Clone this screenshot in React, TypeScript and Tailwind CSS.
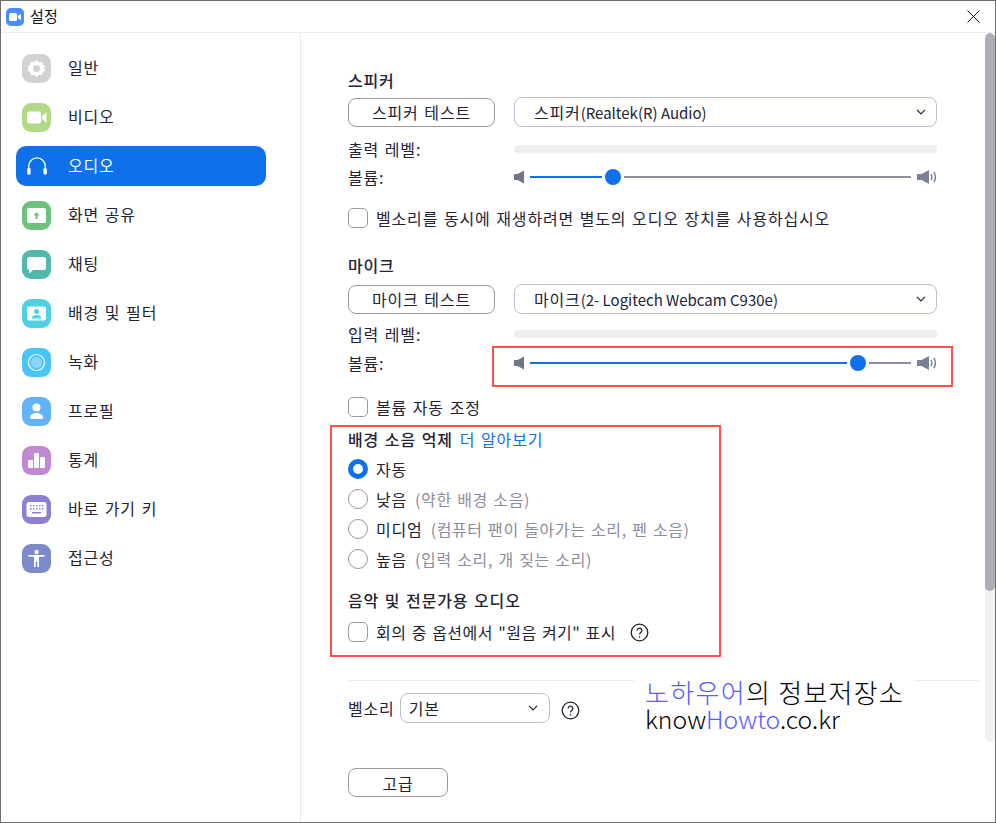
import type { ReactNode } from "react";

const FONT = "font-['Noto_Sans_CJK_KR','Liberation_Sans',sans-serif]";
// hangul in the shot runs wider than Noto, latin does not
const BODY = "text-[16px] tracking-[0.83px] [word-spacing:1.3px]";
const LATIN = "text-[15px] tracking-normal [word-spacing:0px]";

function Tile({ color, children }: { color: string; children: ReactNode }) {
  return (
    <div className={`w-[29px] h-[29px] rounded-[9px] flex items-center justify-center shrink-0 ${color}`}>
      <svg width="29" height="29" viewBox="0 0 29 29" fill="#fff">{children}</svg>
    </div>
  );
}

const nav = [
  {
    label: "일반",
    color: "bg-[#d2d2d2]",
    icon: (
      <path
        fillRule="evenodd"
        d="M14.5 6l2.2 2.3 3.2-.6 1 3.1 2.6 2-1.6 1.7 1.6 1.7-2.6 2-1 3.1-3.2-.6-2.2 2.3-2.2-2.3-3.2.6-1-3.1-2.6-2 1.6-1.7-1.6-1.7 2.6-2 1-3.1 3.2.6zM14.5 11a3.5 3.5 0 100 7 3.5 3.5 0 000-7z"
      />
    ),
  },
  {
    label: "비디오",
    color: "bg-[#b2da86]",
    icon: (
      <>
        <rect x="5" y="8.5" width="14" height="12" rx="2.5" />
        <path d="M20 13l4.5-3.5v10L20 16z" />
      </>
    ),
  },
  { label: "오디오", active: true },
  {
    label: "화면 공유",
    color: "bg-[#6dc27d]",
    icon: (
      <>
        <rect x="5" y="7" width="19" height="15" rx="2" />
        <path d="M14.5 11l3 3.4h-2v3.6h-2v-3.6h-2z" fill="#6dc27d" />
      </>
    ),
  },
  {
    label: "채팅",
    color: "bg-[#4fb9ac]",
    icon: <path d="M7.5 7h14a2.5 2.5 0 012.5 2.5v8a2.5 2.5 0 01-2.5 2.5H11l-4 3.5V20a2.5 2.5 0 01-2-2.5v-8A2.5 2.5 0 017.5 7z" />,
  },
  {
    label: "배경 및 필터",
    color: "bg-[#50d1e3]",
    icon: (
      <>
        <rect x="5" y="7.5" width="19" height="14" rx="2" />
        <circle cx="14.5" cy="12.5" r="2.5" fill="#50d1e3" />
        <path d="M9.5 19.5c0-2.5 2.2-3.5 5-3.5s5 1 5 3.5z" fill="#50d1e3" />
      </>
    ),
  },
  {
    label: "녹화",
    color: "bg-[#4ac4fa]",
    icon: (
      <>
        <circle cx="14.5" cy="14.5" r="8" fill="none" stroke="#fff" strokeWidth="1.2" />
        <circle cx="14.5" cy="14.5" r="5.5" fill="#fff" opacity="0.35" />
      </>
    ),
  },
  {
    label: "프로필",
    color: "bg-[#63b3f9]",
    icon: (
      <>
        <circle cx="14.5" cy="10.5" r="4" />
        <path d="M8 20.5c0-3 3-4.500 6.500-4.500s6.500 1.500 6.500 4.500c0 1-1 1.500-2 1.500h-9c-1 0-2-.5-2-1.500z" />
      </>
    ),
  },
  {
    label: "통계",
    color: "bg-[#c388d4]",
    icon: (
      <>
        <rect x="6" y="14" width="5" height="8" rx="1" />
        <rect x="12" y="7" width="5" height="15" rx="1" />
        <rect x="18" y="11" width="5" height="11" rx="1" />
      </>
    ),
  },
  {
    label: "바로 가기 키",
    color: "bg-[#8d7fd1]",
    icon: (
      <>
        <rect x="4.500" y="7" width="20" height="15" rx="2.500" />
        <path
          d="M8 10h1.500v1.500H8zM11 10h1.500v1.500H11zM14 10h1.500v1.500H14zM17 10h1.500v1.500H17zM20 10h1.500v1.500H20zM8 13h1.500v1.500H8zM11 13h1.500v1.500H11zM14 13h1.500v1.500H14zM17 13h1.500v1.500H17zM20 13h1.500v1.500H20zM10 17h9v1.500h-9z"
          fill="#8d7fd1"
        />
      </>
    ),
  },
  {
    label: "접근성",
    color: "bg-[#7b8acb]",
    icon: (
      <>
        <circle cx="14.5" cy="8" r="2.2" />
        <path d="M6.500 11h16v1.800h-5.500V23h-1.700v-5.500h-1.600V23H12V12.800H6.500z" />
      </>
    ),
  },
];

function Chevron() {
  return (
    <svg width="10" height="6" viewBox="0 0 10 6" fill="none" stroke="#232333" strokeWidth="1.2">
      <path d="M1 .8l4 4 4-4" />
    </svg>
  );
}

function Button({ width, children }: { width: string; children: ReactNode }) {
  return (
    <div className={`${width} h-[29px] rounded-[8px] border border-[#98989f] flex items-center justify-center text-[#232333] shrink-0 ${BODY}`}>
      {children}
    </div>
  );
}

function Select({ children, className }: { children: ReactNode; className: string }) {
  return (
    <div className={`h-[30px] rounded-[8px] border border-[#bdbdd0] flex items-center justify-between text-[#232333] ${BODY} ${className}`}>
      <span>{children}</span>
      <Chevron />
    </div>
  );
}

function Check({ label, className = "" }: { label: ReactNode; className?: string }) {
  return (
    <div className={`flex items-center h-[20px] ${className}`}>
      <div className="w-[20px] h-[20px] rounded-[5px] border border-[#98989f] shrink-0" />
      <span className={`ml-[8px] text-[#232333] whitespace-nowrap ${BODY}`}>{label}</span>
    </div>
  );
}

function Radio({ on, label, note, className = "" }: { on?: boolean; label: string; note?: string; className?: string }) {
  return (
    <div className={`flex items-center h-[20px] ${className}`}>
      {on ? (
        <div className="w-[20px] h-[20px] rounded-full border-[5px] border-[#0e71eb] shrink-0" />
      ) : (
        <div className="w-[20px] h-[20px] rounded-full border border-[#98989f] shrink-0" />
      )}
      <span className={`ml-[8px] text-[#232333] ${BODY}`}>{label}</span>
      {note && (
        <span className="ml-[8px] text-[16px] tracking-[0.6px] [word-spacing:1.3px] text-[#8c8c9c] whitespace-nowrap">{note}</span>
      )}
    </div>
  );
}

function Help() {
  return (
    <svg width="19" height="19" viewBox="0 0 19 19" fill="none" stroke="#232333" strokeWidth="1.3" className="shrink-0">
      <circle cx="9.500" cy="9.500" r="8.300" />
      <path d="M7.200 7.500a2.300 2.300 0 114 1.500c-.9.800-1.700 1.200-1.700 2.500" />
      <path d="M9.500 13.200v1.400" />
    </svg>
  );
}

function Level({ label, className = "" }: { label: string; className?: string }) {
  return (
    <div className={`flex items-center h-[20px] ${className}`}>
      <span className={`w-[166px] text-[#232333] ${BODY}`}>{label}</span>
      <div className="w-[423px] h-[8px] rounded-[4px] bg-[#eeeeee]" />
    </div>
  );
}

function Volume({ percent, className = "" }: { percent: number; className?: string }) {
  return (
    <div className={`flex items-center h-[20px] ${className}`}>
      <span className={`w-[166px] text-[#232333] ${BODY}`}>볼륨:</span>
      <svg width="10" height="14" viewBox="0 0 10 14" fill="#6e7687" className="shrink-0">
        <path d="M0 4h3.500L10 .5v13L3.500 10H0z" />
      </svg>
      <div className="relative flex-none w-[381px] ml-[6px] h-[2px] bg-[#8f8fa3]">
        <div className="h-[2px] bg-[#0e71eb]" style={{ width: `${percent}%` }} />
        <div
          className="absolute top-[-7px] w-[16px] h-[16px] -ml-[8px] rounded-full bg-[#0e71eb] ring-[3px] ring-white"
          style={{ left: `${percent}%` }}
        />
      </div>
      <svg width="20" height="16" viewBox="0 0 20 16" className="ml-[6px] shrink-0" fill="#7a8194">
        <path d="M0 5h4.500L12 1v14L4.500 11H0z" />
        <path d="M14 5c1 1.800 1 4.200 0 6M16.800 2.800c2 3.200 2 7.200 0 10.400" fill="none" stroke="#7a8194" strokeWidth="1.500" />
      </svg>
    </div>
  );
}

export default function App() {
  return (
    <div className={`relative w-[996px] h-[823px] bg-white border border-[#6e6e6e] flex flex-col overflow-hidden ${FONT}`}>
      <header className="h-[32px] shrink-0 border-b border-[#ebebf8] flex items-center pl-[5px] pr-[15px]">
        <div className="w-[18px] h-[18px] rounded-[5px] bg-[#4a8cff] flex items-center justify-center">
          <svg width="12" height="8" viewBox="0 0 12 8" fill="#fff">
            <rect width="8" height="8" rx="1.500" />
            <path d="M8.800 3l3.200-2.300v6.600L8.800 5z" />
          </svg>
        </div>
        <span className="ml-[6px] text-[15px] tracking-[0.3px] text-[#111]">설정</span>
        <svg width="13" height="13" viewBox="0 0 13 13" stroke="#111" strokeWidth="1" className="ml-auto">
          <path d="M.5.5l12 12M12.500.5l-12 12" />
        </svg>
      </header>

      <div className="flex flex-1 min-h-0">
        <aside className="w-[300px] shrink-0 border-r border-[#ebebf0] pt-[15px] pl-[15px]">
          <div className="flex flex-col gap-[9px]">
            {nav.map((item) => (
              <div
                key={item.label}
                className={`w-[250px] h-[40px] rounded-[10px] flex items-center pl-[6px] ${BODY} ${
                  item.active ? "bg-[#0e71eb] text-white" : "text-[#232333]"
                }`}
              >
                {item.active ? (
                  <div className="w-[29px] h-[29px] flex items-center justify-center">
                    <svg width="20" height="18" viewBox="0 0 20 18" fill="none" stroke="#fff" strokeWidth="1.300">
                      <path d="M1.800 13V9a8.200 8.200 0 0116.400 0v4" />
                      <rect x=".8" y="11.500" width="2.200" height="5.500" rx="1.100" fill="#fff" />
                      <rect x="17" y="11.500" width="2.200" height="5.500" rx="1.100" fill="#fff" />
                    </svg>
                  </div>
                ) : (
                  <Tile color={item.color!}>{item.icon}</Tile>
                )}
                <span className="ml-[17px] -mt-[2px]">{item.label}</span>
              </div>
            ))}
          </div>
        </aside>

        <main className="flex-1 min-w-0 pl-[47px] pt-[36px]">
          <div className="w-[589px]">
            <h3 className={`h-[22px] leading-[22px] font-medium text-[#232333] ${BODY}`}>스피커</h3>
            <div className="flex items-center mt-[6px]">
              <Button width="w-[147px]">스피커 테스트</Button>
              <Select className="ml-[19px] flex-1 pl-[19px] pr-[10px]">
                스피커<span className={LATIN}>(Realtek(R) Audio)</span>
              </Select>
            </div>
            <Level label="출력 레벨:" className="mt-[12px]" />
            <Volume percent={21.700} className="mt-[8px]" />
            <Check className="mt-[21px]" label="벨소리를 동시에 재생하려면 별도의 오디오 장치를 사용하십시오" />

            <h3 className={`mt-[26px] h-[22px] leading-[22px] font-medium text-[#232333] ${BODY}`}>마이크</h3>
            <div className="flex items-center mt-[8px]">
              <Button width="w-[147px]">마이크 테스트</Button>
              <Select className="ml-[19px] flex-1 pl-[19px] pr-[10px]">
                마이크<span className={LATIN}>(2- Logitech Webcam C930e)</span>
              </Select>
            </div>
            <Level label="입력 레벨:" className="mt-[10px]" />
            <Volume percent={86.200} className="mt-[9px]" />
            <Check className="mt-[24px]" label="볼륨 자동 조정" />

            <div className={`flex items-center mt-[11px] h-[22px] ${BODY}`}>
              <span className="font-medium text-[#232333]">배경 소음 억제</span>
              <span className="ml-[7px] text-[#0e71eb]">더 알아보기</span>
            </div>
            <Radio on label="자동" className="mt-[9px]" />
            <Radio label="낮음" note="(약한 배경 소음)" className="mt-[10px]" />
            <Radio label="미디엄" note="(컴퓨터 팬이 돌아가는 소리, 펜 소음)" className="mt-[10px]" />
            <Radio label="높음" note="(입력 소리, 개 짖는 소리)" className="mt-[10px]" />
            <h3 className={`mt-[20px] h-[22px] leading-[22px] font-medium text-[#232333] ${BODY}`}>음악 및 전문가용 오디오</h3>
            <div className="flex items-center mt-[11px]">
              <Check label={<span className="tracking-[0.45px]">회의 중 옵션에서 "원음 켜기" 표시</span>} />
              <div className="ml-[14px]">
                <Help />
              </div>
            </div>
          </div>

          <div className="w-[631px] h-px bg-[#ebebf8] mt-[38px]" />

          <div className="flex items-center mt-[12px]">
            <span className={`text-[#232333] ${BODY}`}>벨소리</span>
            <Select className="ml-[5px] w-[150px] pl-[8px] pr-[11px]">기본</Select>
            <div className="ml-[11px] mt-[5px]">
              <Help />
            </div>
          </div>

          <div className="mt-[45px]">
            <Button width="w-[100px]">고급</Button>
          </div>
        </main>

        <div className="w-[10px] shrink-0 flex flex-col">
          <div className="h-[709px] rounded-[5px] bg-[#f0f0f5] overflow-hidden">
            <div className="h-[558px] rounded-[5px] bg-[#adadb5]" />
          </div>
        </div>
      </div>

      {/* annotations painted over the screenshot */}
      <div className="absolute left-[491px] top-[345px] w-[461px] h-[41px] border-2 border-[#ff5050] pointer-events-none" />
      <div className="absolute left-[329px] top-[424px] w-[391px] h-[232px] border-2 border-[#ff5050] pointer-events-none" />
      <div className="absolute left-[633px] top-[677px] w-[280px] h-[62px] bg-white pl-[11px] text-black font-light">
        <div className="h-[27px] leading-[27px] text-[26px] tracking-[1.3px] whitespace-nowrap">
          <span className="text-[#5a5aff]">노하우어</span>의 정보저장소
        </div>
        <div className="h-[27px] leading-[27px] text-[24.7px] whitespace-nowrap">
          know<span className="text-[#5a5aff]">Howto</span>.co.kr
        </div>
      </div>
    </div>
  );
}
